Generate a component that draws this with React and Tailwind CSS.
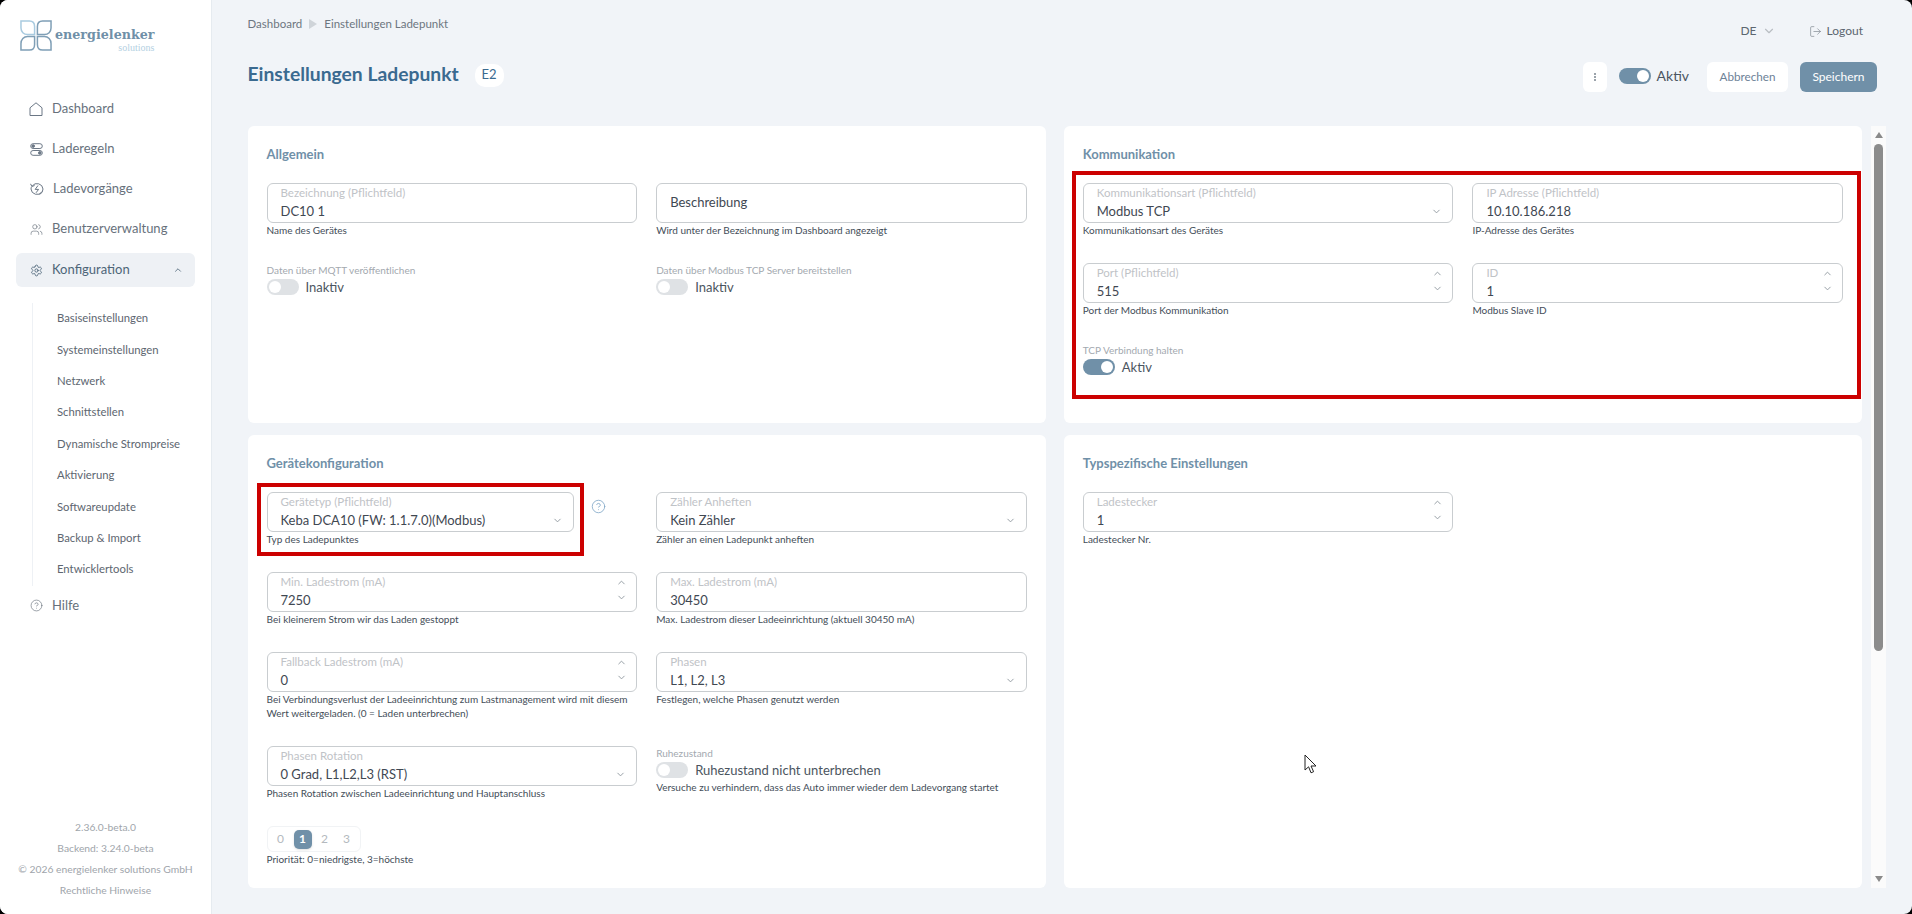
import { ChevronDown, ChevronUp, CircleHelp, LogOut, Settings, Users } from 'lucide-react';

const subItems = ['Basiseinstellungen', 'Systemeinstellungen', 'Netzwerk', 'Schnittstellen', 'Dynamische Strompreise', 'Aktivierung', 'Softwareupdate', 'Backup & Import', 'Entwicklertools'];

const Logo = () => (
  <svg width="32" height="31" viewBox="0 0 34 33" fill="none" strokeWidth="1.6">
    <path d="M1 1 H10 C13.5 1 15.5 3.5 15.5 7 V15.5 H8 C4 15.5 1 12.5 1 8.5 Z" stroke="#a9cbe0" />
    <path d="M33 1 H24 C20.5 1 18.5 3.5 18.5 7 V15.5 H26 C30 15.5 33 12.5 33 8.5 Z" stroke="#7f9fb6" />
    <path d="M1 32 V25 C1 21 4 17.5 8 17.5 H15.5 V26 C15.5 29.5 13.5 32 10 32 Z" stroke="#7f9fb6" />
    <path d="M33 32 V25 C33 21 30 17.5 26 17.5 H18.5 V26 C18.5 29.5 20.5 32 24 32 Z" stroke="#7f9fb6" />
  </svg>
);

const HomeIcon = () => (
  <svg width="14" height="14" viewBox="0 0 14 14" fill="none" stroke="#6b7785" strokeWidth="1">
    <path d="M1 13.5 V5.8 L7 .8 L13 5.8 V13.5 Z" strokeLinejoin="round" />
  </svg>
);

const RulesIcon = () => (
  <svg width="13" height="13" viewBox="0 0 13 13" fill="none" stroke="#6b7785" strokeWidth="1">
    <rect x=".7" y=".7" width="11.6" height="4.8" rx="2.4" />
    <rect x=".7" y="7.5" width="11.6" height="4.8" rx="2.4" />
    <circle cx="3.2" cy="3.1" r="1.3" fill="#6b7785" />
    <circle cx="9.8" cy="9.9" r="1.3" fill="#6b7785" />
  </svg>
);

const SessionsIcon = () => (
  <svg width="14" height="14" viewBox="0 0 14 14" fill="none" stroke="#6b7785" strokeWidth="1">
    <path d="M2.2 4 A6 6 0 0 1 13 7 A6 6 0 0 1 9.5 12.5" />
    <path d="M11.8 10 A6 6 0 0 1 1 7 A6 6 0 0 1 1.6 4.6" />
    <path d="M8 3.5 L5.2 7.4 H8.6 L6 10.8" />
    <path d="M.5 1.8 L1.9 4.4 L4.6 3.6" />
  </svg>
);

const Hint = ({ children }) => <p className="text-[10px] leading-[14px] text-[#434d58]">{children}</p>;

const Field = ({ label, value, kind, hint, className = '' }) => (
  <div className="pb-[26px]">
    <div className={`relative h-10 rounded-md border border-[#c9cdd0] pl-[13px] pt-[2px] ${className}`}>
      <div className="text-[11.5px] leading-[14px] text-[#bfc3c7]">{label}</div>
      <div className="mt-[2px] text-[13px] leading-[18px] text-[#3f4852]">{value}</div>
      {kind === 'select' && <ChevronDown size={11} className="absolute right-[10px] top-[22px] text-[#8f989f]" />}
      {kind === 'number' && (
        <div className="absolute right-[9px] top-[4px] flex flex-col gap-[4px]">
          <ChevronUp size={11} className="text-[#8f989f]" />
          <ChevronDown size={11} className="text-[#8f989f]" />
        </div>
      )}
    </div>
    <Hint>{hint}</Hint>
  </div>
);

const Toggle = ({ on }) => (
  <span className={`flex h-4 w-8 items-center rounded-full px-[2px] ${on ? 'justify-end bg-[#7090a8]' : 'justify-start bg-[#dfe2e5]'}`}>
    <span className="h-3 w-3 rounded-full bg-white" />
  </span>
);

const Switch = ({ label, state, on }) => (
  <div className="pb-[26px]">
    <div className="text-[10px] leading-[14px] text-[#a3a9af]">{label}</div>
    <div className="mt-[2px] flex h-4 items-center gap-[7px]">
      <Toggle on={on} />
      <span className="text-[13px] leading-4 text-[#4b5560]">{state}</span>
    </div>
  </div>
);

const Card = ({ title, children, className = '' }) => (
  <section className={`relative rounded-md bg-white px-[19px] pt-[19px] ${className}`}>
    <h2 className="mb-[20px] text-[13px] font-bold leading-[18px] text-[#7090a8]">{title}</h2>
    {children}
  </section>
);

const Sidebar = () => (
  <aside className="flex w-[212px] shrink-0 flex-col border-r border-[#e6ebf0] bg-white">
    <div className="flex h-[89px] items-start pl-[20px] pt-[20px]">
      <Logo />
      <div className="ml-[3px] flex flex-col items-end pt-[7px]">
        <span className="font-['DejaVu_Serif'] text-[12.7px] font-bold leading-[16px] text-[#7090a8]">energielenker</span>
        <span className="font-['Liberation_Serif'] text-[10px] leading-[10px] text-[#b4d0e2]">solutions</span>
      </div>
    </div>
    <nav className="flex flex-col px-[16px] text-[13px] text-[#67717c]">
      <div className="flex h-10 items-center gap-[9px] pl-[13px]"><HomeIcon />Dashboard</div>
      <div className="flex h-10 items-center gap-[9px] pl-[14px]"><RulesIcon />Laderegeln</div>
      <div className="flex h-10 items-center gap-[9px] pl-[14px]"><SessionsIcon />Ladevorgänge</div>
      <div className="flex h-10 items-center gap-[9px] pl-[14px]"><Users size={13} strokeWidth={1.2} />Benutzerverwaltung</div>
      <div className="mt-[4px] flex h-[34px] items-center gap-[9px] rounded-md bg-[#eef1f5] pl-[14px] pr-[12px] text-[#4d6578]">
        <Settings size={13} strokeWidth={1.6} />
        Konfiguration
        <ChevronUp size={10} className="ml-auto" />
      </div>
      <ul className="ml-[16px] mt-[16px] border-l border-[#eef1f5] pl-[24px] text-[11.3px] text-[#5d6670]">
        {subItems.map((s) => (
          <li key={s} className="flex h-[31.4px] items-center">{s}</li>
        ))}
      </ul>
      <div className="mt-[4px] flex h-[32px] items-center gap-[9px] pl-[14px] text-[#67717c]">
        <CircleHelp size={13} strokeWidth={1.2} />
        Hilfe
      </div>
    </nav>
    <footer className="mt-auto flex flex-col items-center pb-[13px] text-[10.3px] leading-[21px] text-[#a0a5ab]">
      <span>2.36.0-beta.0</span>
      <span>Backend: 3.24.0-beta</span>
      <span>© 2026 energielenker solutions GmbH</span>
      <span>Rechtliche Hinweise</span>
    </footer>
  </aside>
);

const Header = () => (
  <>
    <div className="flex h-[62px] justify-between">
      <div className="flex h-[48px] items-center gap-[7px] text-[11.5px] text-[#6d7680]">
        Dashboard
        <span className="h-0 w-0 border-y-[5px] border-l-[8px] border-y-transparent border-l-[#cfd4d9]" />
        <span>Einstellungen Ladepunkt</span>
      </div>
      <div className="mr-[23px] mt-[21px] flex h-5 items-center text-[12px] text-[#5c6670]">
        DE
        <ChevronDown size={14} className="ml-[5px] text-[#b9bec3]" />
        <LogOut size={13} strokeWidth={1.1} className="ml-[33px] text-[#6d7680]" />
        <span className="ml-[5px]">Logout</span>
      </div>
    </div>
    <div className="flex h-[30px] items-center">
      <h1 className="-mt-[6px] text-[19.3px] font-bold text-[#3a6a90]">Einstellungen Ladepunkt</h1>
      <span className="-mt-[4px] ml-[16px] flex h-[23px] w-[29px] items-center justify-center rounded-[10px] bg-white text-[13px] text-[#3a6a90]">E2</span>
      <div className="ml-auto mr-[9px] flex items-center">
        <button className="flex h-[30px] w-6 flex-col items-center justify-center gap-[1px] rounded-md bg-white">
          <span className="h-[2px] w-[2px] rounded-full bg-[#7a858f]" />
          <span className="h-[2px] w-[2px] rounded-full bg-[#7a858f]" />
          <span className="h-[2px] w-[2px] rounded-full bg-[#7a858f]" />
        </button>
        <span className="-mt-[2px] ml-3"><Toggle on /></span>
        <span className="-mt-[4px] ml-[6px] text-[14px] text-[#4b5560]">Aktiv</span>
        <button className="ml-[18px] h-[30px] w-[81px] rounded-md bg-white text-[11.7px] text-[#6d8297]">Abbrechen</button>
        <button className="ml-3 h-[30px] w-[77px] rounded-md bg-[#7090a8] text-[12px] text-white">Speichern</button>
      </div>
    </div>
  </>
);

export default function App() {
  return (
    <div className="h-[914px] w-[1912px] overflow-hidden bg-black font-['Lato',sans-serif]">
      <div className="relative flex h-full overflow-hidden rounded-lg bg-[#f1f4f8]">
        <Sidebar />
        <main className="flex min-w-0 flex-1 flex-col pl-[35.5px] pr-[26px]">
          <Header />
          <div className="mt-[34px] flex h-[762px] gap-[9px]">
            <div className="grid flex-1 grid-cols-2 grid-rows-[297px_453px] gap-x-[18px] gap-y-[12px]">
              <Card title="Allgemein">
                <div className="grid grid-cols-2 gap-x-[19px]">
                  <Field label="Bezeichnung (Pflichtfeld)" value="DC10 1" hint="Name des Gerätes" />
                  <div className="pb-[26px]">
                    <div className="flex h-10 items-center rounded-md border border-[#c9cdd0] pl-[13px] text-[13px] text-[#3f4852]">Beschreibung</div>
                    <Hint>Wird unter der Bezeichnung im Dashboard angezeigt</Hint>
                  </div>
                  <Switch label="Daten über MQTT veröffentlichen" state="Inaktiv" />
                  <Switch label="Daten über Modbus TCP Server bereitstellen" state="Inaktiv" />
                </div>
              </Card>

              <Card title="Kommunikation">
                <div className="grid grid-cols-2 gap-x-[19px]">
                  <Field label="Kommunikationsart (Pflichtfeld)" value="Modbus TCP" kind="select" hint="Kommunikationsart des Gerätes" />
                  <Field label="IP Adresse (Pflichtfeld)" value="10.10.186.218" hint="IP-Adresse des Gerätes" />
                  <Field label="Port (Pflichtfeld)" value="515" kind="number" hint="Port der Modbus Kommunikation" />
                  <Field label="ID" value="1" kind="number" hint="Modbus Slave ID" />
                  <Switch label="TCP Verbindung halten" state="Aktiv" on />
                </div>
                <div className="absolute left-[8px] top-[45px] h-[228px] w-[789px] border-4 border-[#cc0000]" />
              </Card>

              <Card title="Gerätekonfiguration">
                <div className="grid grid-cols-2 gap-x-[19px]">
                  <div className="relative">
                    <Field label="Gerätetyp (Pflichtfeld)" value="Keba DCA10 (FW: 1.1.7.0)(Modbus)" kind="select" hint="Typ des Ladepunktes" className="w-[307px]" />
                    <CircleHelp size={15} strokeWidth={1.3} className="absolute left-[324px] top-[7px] text-[#7fa6c6]" />
                  </div>
                  <Field label="Zähler Anheften" value="Kein Zähler" kind="select" hint="Zähler an einen Ladepunkt anheften" />
                  <Field label="Min. Ladestrom (mA)" value="7250" kind="number" hint="Bei kleinerem Strom wir das Laden gestoppt" />
                  <Field label="Max. Ladestrom (mA)" value="30450" hint="Max. Ladestrom dieser Ladeeinrichtung (aktuell 30450 mA)" />
                  <Field label="Fallback Ladestrom (mA)" value="0" kind="number" hint="Bei Verbindungsverlust der Ladeeinrichtung zum Lastmanagement wird mit diesem Wert weitergeladen. (0 = Laden unterbrechen)" />
                  <Field label="Phasen" value="L1, L2, L3" kind="select" hint="Festlegen, welche Phasen genutzt werden" />
                  <Field label="Phasen Rotation" value="0 Grad, L1,L2,L3 (RST)" kind="select" hint="Phasen Rotation zwischen Ladeeinrichtung und Hauptanschluss" />
                  <div>
                    <Switch label="Ruhezustand" state="Ruhezustand nicht unterbrechen" />
                    <div className="mt-[-24px]"><Hint>Versuche zu verhindern, dass das Auto immer wieder dem Ladevorgang startet</Hint></div>
                  </div>
                </div>
                <div className="flex h-[26px] w-[94px] items-center rounded-md border border-[#f1f3f5] px-[2px] text-[12px] text-[#b4b9be]">
                  <span className="w-[22px] text-center">0</span>
                  <span className="flex w-[22px] justify-center">
                    <span className="flex h-[19px] w-[18px] items-center justify-center rounded-[5px] bg-[#7090a8] font-bold text-white shadow-sm">1</span>
                  </span>
                  <span className="w-[22px] text-center">2</span>
                  <span className="w-[22px] text-center">3</span>
                </div>
                <Hint>Priorität: 0=niedrigste, 3=höchste</Hint>
                <div className="absolute left-[9px] top-[48px] h-[73px] w-[327px] border-4 border-[#cc0000]" />
              </Card>

              <Card title="Typspezifische Einstellungen">
                <div className="w-[370px]">
                  <Field label="Ladestecker" value="1" kind="number" hint="Ladestecker Nr." />
                </div>
              </Card>
            </div>
            <div className="flex w-[15px] flex-col items-center bg-[#fbfbfb] pt-[6px]">
              <span className="h-0 w-0 border-x-[4px] border-b-[6px] border-x-transparent border-b-[#8a8a8a]" />
              <span className="mt-[6px] h-[507px] w-[9px] rounded-full bg-[#8c8c8c]" />
              <span className="mb-[6px] mt-auto h-0 w-0 border-x-[4px] border-t-[6px] border-x-transparent border-t-[#8a8a8a]" />
            </div>
          </div>
        </main>
        <svg className="absolute left-[1304px] top-[754px]" width="14" height="21" viewBox="0 0 14 21">
          <path d="M1 1 V16 L4.6 12.8 L7 18.8 L9.6 17.7 L7 12 H12 Z" fill="white" stroke="#222" strokeWidth="1" />
        </svg>
      </div>
    </div>
  );
}
